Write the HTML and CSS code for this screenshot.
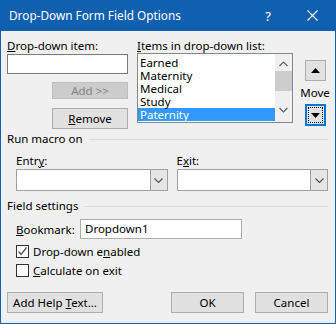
FILE: index.html
```html
<!DOCTYPE html>
<html>
<head>
    <title>Drop-Down Form Field Options</title>
    <link rel="stylesheet" href="styles.css">
</head>
<body>
    <div class="dialog">
        <div class="titlebar">
            <span class="title">Drop-Down Form Field Options</span>
            <span class="help">?</span>
            <svg class="close" width="11" height="11" viewBox="0 0 11 11">
                <path d="M0.5 0.5 L10.5 10.5 M10.5 0.5 L0.5 10.5" stroke="#fff" stroke-width="1.1" fill="none"/>
            </svg>
        </div>

        <div class="client">
            <!-- parte de arriba: item, lista y botones mover -->
            <div class="top">
                <div class="col-item">
                    <div class="label"><u>D</u>rop-down item:</div>
                    <div class="textbox item-box"></div>
                    <div class="btn btn-add"><span>Add &gt;&gt;</span></div>
                    <div class="btn btn-remove"><span><u>R</u>emove</span></div>
                </div>

                <div class="col-list">
                    <div class="label"><u>I</u>tems in drop-down list:</div>
                    <div class="listbox">
                        <div class="items">
                            <div class="li">Earned</div>
                            <div class="li">Maternity</div>
                            <div class="li">Medical</div>
                            <div class="li">Study</div>
                            <div class="li selected">Paternity</div>
                        </div>
                        <div class="scrollbar">
                            <svg width="9" height="6" viewBox="0 0 9 6"><path d="M0.5 5 L4.5 1 L8.5 5" stroke="#606060" stroke-width="1.2" fill="none"/></svg>
                            <div class="thumb"></div>
                            <svg width="9" height="6" viewBox="0 0 9 6"><path d="M0.5 1 L4.5 5 L8.5 1" stroke="#606060" stroke-width="1.2" fill="none"/></svg>
                        </div>
                    </div>
                </div>

                <div class="col-move">
                    <div class="sqbtn">
                        <svg width="9" height="5" viewBox="0 0 9 5"><path d="M0 5 L4.5 0 L9 5 Z" fill="#000"/></svg>
                    </div>
                    <div class="move-label">Move</div>
                    <div class="sqbtn focused">
                        <div class="focus-rect">
                            <svg width="9" height="5" viewBox="0 0 9 5"><path d="M0 0 L9 0 L4.5 5 Z" fill="#000"/></svg>
                        </div>
                    </div>
                </div>
            </div>

            <!-- Run macro on -->
            <div class="group-head">
                <span>Run macro on</span>
                <div class="rule"></div>
            </div>
            <div class="macro-row">
                <div class="macro-col">
                    <div class="label">Entr<u>y</u>:</div>
                    <div class="combo">
                        <div class="combo-text"></div>
                        <div class="combo-btn">
                            <svg width="9" height="5" viewBox="0 0 9 5"><path d="M0.5 0.5 L4.5 4.5 L8.5 0.5" stroke="#505050" stroke-width="1.1" fill="none"/></svg>
                        </div>
                    </div>
                </div>
                <div class="macro-col">
                    <div class="label">E<u>x</u>it:</div>
                    <div class="combo">
                        <div class="combo-text"></div>
                        <div class="combo-btn">
                            <svg width="9" height="5" viewBox="0 0 9 5"><path d="M0.5 0.5 L4.5 4.5 L8.5 0.5" stroke="#505050" stroke-width="1.1" fill="none"/></svg>
                        </div>
                    </div>
                </div>
            </div>

            <!-- Field settings -->
            <div class="group-head settings-head">
                <span>Field settings</span>
                <div class="rule"></div>
            </div>
            <div class="bookmark-row">
                <span class="bm-label"><u>B</u>ookmark:</span>
                <div class="textbox bm-box">Dropdown1</div>
            </div>
            <div class="check-row">
                <span class="checkbox">
                    <svg width="11" height="11" viewBox="0 0 11 11"><path d="M1.5 5.5 L4 8.5 L9.5 1.5" stroke="#555" stroke-width="1.3" fill="none"/></svg>
                </span>
                <span>Drop-down e<u>n</u>abled</span>
            </div>
            <div class="check-row">
                <span class="checkbox"></span>
                <span><u>C</u>alculate on exit</span>
            </div>

            <!-- botones de abajo -->
            <div class="bottom">
                <div class="btn btn-help"><span>Add Help <u>T</u>ext...</span></div>
                <div class="spacer"></div>
                <div class="btn btn-ok"><span>OK</span></div>
                <div class="btn btn-cancel"><span>Cancel</span></div>
            </div>
        </div>
    </div>
</body>
</html>
```

FILE: styles.css
```css
body {
    margin: 0;
    padding: 0;
    font-family: "Noto Sans", "Liberation Sans", sans-serif;
    font-size: 11.5px;
    color: #000;
}

u {
    text-decoration: underline;
    text-underline-offset: 1px;
}

.dialog {
    width: 336px;
    height: 324px;
    box-sizing: border-box;
    border: 1px solid #1060b0;
    border-top: none;
    background-color: #f0f0f0;
    display: flex;
    flex-direction: column;
}

.titlebar {
    height: 31px;
    margin: 0 -1px;
    background-color: #1060b0; /* azul de Windows */
    color: #fff;
    display: flex;
    align-items: center;
    padding-left: 9px;
    font-size: 11.8px;
}

.title {
    flex: 1;
    margin-top: -1px;
}

.help {
    font-size: 13px;
    margin-right: 36px;
}

.close {
    margin-right: 18px;
}

.client {
    flex: 1;
    padding: 7px 7px 0 6px;
}

.label {
    height: 15px;
    line-height: 15px;
    white-space: nowrap;
}

/* parte de arriba */
.top {
    display: flex;
    height: 93px;
}

.col-item {
    width: 121px;
    display: flex;
    flex-direction: column;
}

.textbox {
    background-color: #fff;
    border: 1px solid #7a7a7a;
    box-sizing: border-box;
}

.item-box {
    height: 20px;
    margin-top: 1px;
}

.btn {
    box-sizing: border-box;
    border: 1px solid #adadad;
    background-color: #e1e1e1;
    display: flex;
    align-items: center;
    justify-content: center;
    white-space: nowrap;
}

.btn-add {
    margin-top: 8px;
    margin-left: 45px;
    height: 17px;
    width: 76px;
    background-color: #cccccc;
    border-color: #bfbfbf;
    color: #838383;
}

.btn-remove {
    margin-top: 9px;
    margin-left: 45px;
    height: 21px;
    width: 76px;
}

.col-list {
    width: 156px;
    margin-left: 9px;
}

.listbox {
    height: 70px;
    box-sizing: border-box;
    border: 1px solid #828790;
    background-color: #fff;
    display: flex;
}

.items {
    flex: 1;
    padding-top: 2px;
}

.li {
    height: 13px;
    line-height: 13px;
    padding-left: 2px;
}

.li.selected {
    background-color: #3399ff;
    color: #fff;
}

.scrollbar {
    width: 17px;
    background-color: #f0f0f0;
    display: flex;
    flex-direction: column;
    align-items: center;
    padding-top: 7px;
    box-sizing: border-box;
}

.thumb {
    width: 17px;
    height: 20px;
    margin-top: 4px;
    margin-bottom: 16px;
    background-color: #cdcdcd;
}

.col-move {
    width: 26px;
    margin-left: 9px;
    display: flex;
    flex-direction: column;
    align-items: center;
    padding-top: 22px;
}

.sqbtn {
    width: 21px;
    height: 21px;
    box-sizing: border-box;
    border: 1px solid #adadad;
    background-color: #e1e1e1;
    display: flex;
    align-items: center;
    justify-content: center;
}

.sqbtn.focused {
    border: 2px solid #0078d7;
    height: 22px;
}

.focus-rect {
    width: 15px;
    height: 16px;
    box-sizing: border-box;
    border: 1px dotted #000;
    display: flex;
    align-items: center;
    justify-content: center;
}

.move-label {
    margin-top: 4px;
    height: 15px;
    line-height: 15px;
    margin-bottom: 4px;
}

/* grupos */
.group-head {
    display: flex;
    align-items: center;
    height: 15px;
    line-height: 15px;
    margin-top: 0px;
}

.group-head .rule {
    flex: 1;
    height: 1px;
    background-color: #dcdcdc;
    margin-left: 6px;
    margin-top: 1px;
}

.macro-row {
    display: flex;
    margin-top: 7px;
    padding-left: 9px;
    gap: 9px;
}

.macro-col {
    width: 152px;
}

.combo {
    height: 22px;
    margin-top: 1px;
    box-sizing: border-box;
    border: 1px solid #a0a0a0;
    background-color: #fff;
    display: flex;
}

.combo-text {
    flex: 1;
}

.combo-btn {
    width: 16px;
    background-color: #e5e5e5;
    border-left: 1px solid #a0a0a0;
    display: flex;
    align-items: center;
    justify-content: center;
}

.settings-head {
    margin-top: 7px;
}

.bookmark-row {
    display: flex;
    align-items: center;
    margin-top: 6px;
    padding-left: 9px;
}

.bm-label {
    width: 64px;
}

.bm-box {
    width: 162px;
    height: 20px;
    line-height: 18px;
    padding-left: 4px;
    border-color: #adadad;
}

.check-row {
    display: flex;
    align-items: center;
    height: 19px;
    padding-left: 9px;
    margin-top: 3px;
}

.check-row + .check-row {
    margin-top: 0;
}

.checkbox {
    width: 13px;
    height: 13px;
    box-sizing: border-box;
    border: 1px solid #333;
    background-color: #fff;
    margin-right: 4px;
    display: flex;
    align-items: center;
    justify-content: center;
}

.checkbox svg {
    display: block;
}

.bottom {
    display: flex;
    margin-top: 12px;
}

.bottom .btn {
    height: 21px;
}

.btn-help {
    width: 96px;
}

.spacer {
    flex: 1;
}

.btn-ok {
    width: 73px;
    margin-right: 11px;
}

.btn-cancel {
    width: 73px;
}
```
